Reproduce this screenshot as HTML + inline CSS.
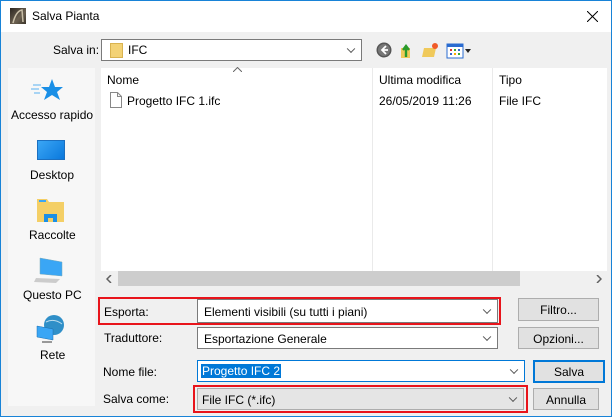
<!DOCTYPE html>
<html><head><meta charset="utf-8"><style>
*{box-sizing:border-box;margin:0;padding:0}
body{width:612px;height:417px;overflow:hidden;background:#fff;font-family:"Liberation Sans",sans-serif;font-size:12px;color:#000}
.win{position:absolute;left:0;top:0;width:612px;height:417px;border:1px solid #1883d7;background:#f0f0f0}
.title{position:absolute;left:0;top:0;width:610px;height:31px;background:#fff}
.a{position:absolute;white-space:nowrap}
.combo{position:absolute;background:#fff;border:1px solid #7a7a7a}
.chev{position:absolute;right:7px;top:50%;width:6px;height:6px;border-right:1px solid #555;border-bottom:1px solid #555;transform:translateY(-70%) rotate(45deg)}
.btn{position:absolute;background:#e1e1e1;border:1px solid #adadad;text-align:center}
.red{position:absolute;border:2px solid #e8141b}
</style></head><body><div class="win">
<div class="title">
 <div class="a" style="left:9px;top:7px;width:16px;height:16px;background:linear-gradient(135deg,#2b2620,#6b6050 60%,#3a342a)"></div>
 <svg class="a" style="left:9px;top:7px" width="16" height="16"><path d="M3 15 Q6 3 12 2 L13 14" stroke="#c9bfa8" fill="none" stroke-width="1.5"/></svg>
 <div class="a" style="left:31px;top:8px;font-size:12px">Salva Pianta</div>
 <svg class="a" style="left:586px;top:10px" width="11" height="11"><path d="M0 0L11 11M11 0L0 11" stroke="#000" stroke-width="1"/></svg>
</div>
<div class="a" style="left:52px;top:42px">Salva in:</div>
<div class="combo" style="left:100px;top:38px;width:261px;height:22px">
 <div class="a" style="left:8px;top:3px;width:13px;height:15px;background:#f3d275;border:1px solid #d9b350"></div>
 <div class="a" style="left:26px;top:3px">IFC</div><div class="chev"></div></div>
<svg class="a" style="left:375px;top:41px" width="100" height="17">
 <circle cx="8" cy="8" r="7.5" fill="#555"/><circle cx="8" cy="8" r="6" fill="#777"/><path d="M10 4L6 8L10 12M6 8H12" stroke="#fff" stroke-width="1.8" fill="none"/>
 <path d="M25 6h9v10h-9z" fill="#f0c95a"/><path d="M30 15V6M27 8l3-4 3 4" stroke="#2a9a2a" stroke-width="2.4" fill="none"/>
 <path d="M48 6h12l-2 9h-12z" fill="#f0c95a"/><circle cx="59" cy="4" r="3" fill="#f05a28"/>
 <rect x="71" y="2" width="16" height="14" fill="#fff" stroke="#2a6bd0"/><rect x="71" y="2" width="16" height="3" fill="#2a6bd0"/>
 <rect x="74" y="7" width="2" height="2" fill="#d33"/><rect x="78" y="7" width="2" height="2" fill="#3a3"/><rect x="82" y="7" width="2" height="2" fill="#36c"/>
 <rect x="74" y="11" width="2" height="2" fill="#36c"/><rect x="78" y="11" width="2" height="2" fill="#fa0"/><rect x="82" y="11" width="2" height="2" fill="#3a3"/>
 <path d="M89 7h6l-3 4z" fill="#222"/>
</svg>
<div class="a" style="left:7px;top:67px;width:87px;height:338px;background:#f7f7f7"></div>
<svg class="a" style="left:30px;top:76px" width="34" height="28"><path d="M21 2l3 8 8 0-6 5 3 8-8-5-8 5 3-8-6-5 8 0z" fill="#1a8fe6"/><path d="M2 8h8M0 12h8M3 16h6" stroke="#5ab0f0" stroke-width="1"/></svg>
<div class="a" style="left:10px;top:107px">Accesso rapido</div>
<div class="a" style="left:36px;top:139px;width:28px;height:20px;background:linear-gradient(135deg,#3aa6f5,#0a78dc);border:1px solid #1b6fc0"></div>
<div class="a" style="left:29px;top:167px">Desktop</div>
<svg class="a" style="left:35px;top:196px" width="30" height="26"><path d="M1 2h10l2 3h15v20H1z" fill="#f4cf66"/><rect x="3" y="3" width="7" height="2" fill="#3aa6f5"/><path d="M8 25v-8h13v8h-4v-4h-5v4z" fill="#1a8fe6"/></svg>
<div class="a" style="left:28px;top:227px">Raccolte</div>
<svg class="a" style="left:33px;top:255px" width="34" height="28"><path d="M6 2l22 4v14l-22-2z" fill="#3aa6f5" stroke="#7ab" stroke-width=".5"/><path d="M2 22l24 1-4 4-22-1z" fill="#ccc"/></svg>
<div class="a" style="left:22px;top:287px">Questo PC</div>
<svg class="a" style="left:35px;top:313px" width="30" height="32"><circle cx="18" cy="11" r="10" fill="#2f8fc8"/><path d="M10 8q8-4 16 2" stroke="#bde" fill="none"/><path d="M1 12l16 3v11l-16-3z" fill="#3aa6f5" stroke="#1a6fb0" stroke-width=".5"/><path d="M6 28h10" stroke="#999" stroke-width="2"/></svg>
<div class="a" style="left:39px;top:347px">Rete</div>
<div class="a" style="left:100px;top:67px;width:506px;height:218px;background:#fff"></div>
<div class="a" style="left:371px;top:67px;width:1px;height:203px;background:#eaeaea"></div>
<div class="a" style="left:491px;top:67px;width:1px;height:203px;background:#eaeaea"></div>
<svg class="a" style="left:232px;top:66px" width="9" height="5"><path d="M0 5L4.5 0.5L9 5" stroke="#666" fill="none"/></svg>
<div class="a" style="left:106px;top:72px">Nome</div>
<div class="a" style="left:378px;top:72px">Ultima modifica</div>
<div class="a" style="left:498px;top:72px">Tipo</div>
<svg class="a" style="left:109px;top:91px" width="12" height="16"><path d="M0.5 0.5h7l4 4v11h-11z" fill="#fff" stroke="#888"/><path d="M7.5 .5v4h4" fill="none" stroke="#888"/></svg>
<div class="a" style="left:126px;top:93px">Progetto IFC 1.ifc</div>
<div class="a" style="left:378px;top:93px">26/05/2019 11:26</div>
<div class="a" style="left:498px;top:93px">File IFC</div>
<div class="a" style="left:100px;top:270px;width:506px;height:15px;background:#f0f0f0"></div>
<div class="a" style="left:117px;top:270px;width:402px;height:15px;background:#cdcdcd"></div>
<svg class="a" style="left:105px;top:274px" width="6" height="8"><path d="M5 0L1 4L5 8" stroke="#606060" stroke-width="1.5" fill="none"/></svg>
<svg class="a" style="left:595px;top:274px" width="6" height="8"><path d="M1 0L5 4L1 8" stroke="#606060" stroke-width="1.5" fill="none"/></svg>

<div class="red" style="left:97px;top:296px;width:403px;height:28px"></div>
<div class="a" style="left:103px;top:304px">Esporta:</div>
<div class="combo" style="left:196px;top:298px;width:301px;height:24px"><div class="a" style="left:6px;top:5px">Elementi visibili (su tutti i piani)</div><div class="chev"></div></div>
<div class="btn" style="left:517px;top:297px;width:81px;height:23px;padding-top:4px">Filtro...</div>
<div class="a" style="left:103px;top:330px">Traduttore:</div>
<div class="combo" style="left:196px;top:326px;width:301px;height:22px"><div class="a" style="left:6px;top:4px">Esportazione Generale</div><div class="chev"></div></div>
<div class="btn" style="left:517px;top:326px;width:81px;height:22px;padding-top:4px">Opzioni...</div>
<div class="a" style="left:102px;top:364px">Nome file:</div>
<div class="combo" style="left:196px;top:359px;width:328px;height:22px;border-color:#0078d7"><div class="a" style="left:3px;top:3px;background:#0078d7;color:#fff;padding:0 1px">Progetto IFC 2</div><div class="chev"></div></div>
<div class="btn" style="left:532px;top:359px;width:72px;height:23px;border:2px solid #0078d7;padding-top:3px">Salva</div>
<div class="red" style="left:192px;top:384px;width:335px;height:28px"></div>
<div class="a" style="left:102px;top:391px">Salva come:</div>
<div class="combo" style="left:196px;top:387px;width:327px;height:22px;background:#e5e5e5;border-color:#adadad"><div class="a" style="left:4px;top:4px">File IFC (*.ifc)</div><div class="chev"></div></div>
<div class="btn" style="left:532px;top:387px;width:66px;height:22px;padding-top:4px">Annulla</div>
</div></body></html>
